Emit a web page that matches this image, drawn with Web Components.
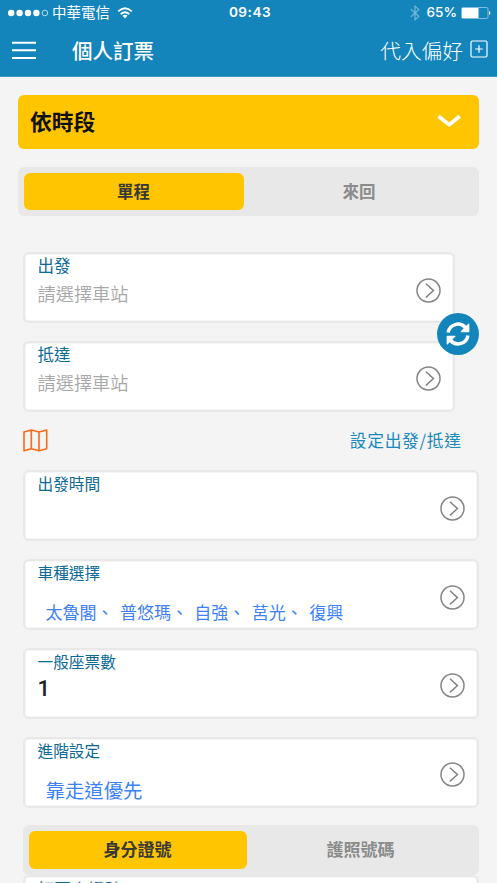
<!DOCTYPE html>
<html lang="zh-Hant">
<head>
<meta charset="utf-8">
<title>個人訂票</title>
<style>
html,body{margin:0;height:883px;overflow:hidden;background:#f4f4f4}
body{font-family:"Noto Sans CJK TC",sans-serif}
</style>
</head>
<body>
<booking-page></booking-page>
<script>
const define = (name, html, setup) => customElements.define(name, class extends HTMLElement {
  constructor() {
    super();
    const t = document.createElement('template');
    t.innerHTML = html;
    this.attachShadow({ mode: 'open' }).append(t.content.cloneNode(true));
    if (setup) setup(this);
  }
});

define('status-bar', `
<style>
:host{display:grid;grid-template-columns:1fr auto 1fr;align-items:center;height:25px;padding:0 6px 0 8px;color:#fff;font:14px/25px Inter,"Noto Sans CJK TC",sans-serif}
div{display:flex;align-items:center}
svg{display:block;flex:none}
.name{font-size:14.5px;margin-left:3px}
.wifi{margin-left:7px}
.time{font-size:13.6px;font-weight:600;letter-spacing:.5px;padding-left:1px}
.end{justify-content:flex-end}
.pct{font-size:13.6px;margin:0 4px 0 7px;font-family:Inter,sans-serif;font-weight:450}
</style>
<div><svg width="41" height="10" viewBox="0 0 41 10"><g fill="#fff"><circle cx="3.2" cy="5" r="3.2"/><circle cx="11.6" cy="5" r="3.2"/><circle cx="20" cy="5" r="3.2"/><circle cx="28.4" cy="5" r="3.2"/></g><circle cx="36.9" cy="5" r="2.8" fill="none" stroke="#fff" stroke-width=".7"/></svg>
<span class="name">中華電信</span>
<svg class="wifi" width="16" height="12" viewBox="0 0 16 12" fill="none" stroke="#fff" stroke-width="1.9"><path d="M1.2 4.4Q8-2 14.8 4.4M3.7 7.1Q8 3.2 12.3 7.1"/><path d="M5.5 8.8Q8 6.8 10.5 8.8L8 11.4Z" fill="#fff" stroke="none"/></svg></div>
<span class="time">09:43</span>
<div class="end"><svg width="10" height="16" viewBox="0 0 10 16" fill="none" stroke="#7dbbdc" stroke-width="1.1"><path d="M.7 4.2L8.8 11.3 5 14.7V1.2L8.8 4.7.7 11.8"/></svg>
<span class="pct">65%</span>
<svg width="30" height="12" viewBox="0 0 30 12"><rect x=".5" y=".5" width="26.5" height="11" rx="1.6" fill="none" stroke="#9dcce4" stroke-width=".8"/><path d="M1 1h16.5v10H1z" fill="#fff"/><path d="M28 4q1.4 .3 1.4 2t-1.4 2z" fill="#fff"/></svg></div>`);

define('title-bar', `
<style>
:host{display:flex;align-items:center;box-sizing:border-box;height:52px;padding:0 9px 1px 12px;color:#fff;border-bottom:1px solid #3d9bc8}
svg{display:block;flex:none}
h1{margin:-1px auto 0 36px;font-size:20.5px;font-weight:500;line-height:30px}
span{font-size:20.7px;font-weight:300;line-height:30px;margin:-1px 7px 0 0}
.plus{margin-top:-2px}
</style>
<svg width="24" height="18" viewBox="0 0 24 18" stroke="#fff" stroke-width="2"><path d="M0 1.7h24M0 9.3h24M0 16.9h24"/></svg>
<h1>個人訂票</h1><span>代入偏好</span>
<svg class="plus" width="18" height="18" viewBox="0 0 18 18" fill="none" stroke="#fff" stroke-width="1.2"><rect x="1" y="1" width="16" height="16" rx="1.5"/><path d="M9 5.2v7.6M5.2 9h7.6"/></svg>`);

define('mode-select', `
<style>
:host{display:flex;align-items:center;justify-content:space-between;box-sizing:border-box;height:54px;padding:0 18.5px 0 12px;border-radius:6px;background:#ffc600;color:#111}
b{font-size:21.8px;font-weight:700;line-height:32px;margin-top:-2px}
svg{display:block;margin-top:-2px}
</style>
<b><slot></slot></b><svg width="24" height="14" viewBox="0 0 24 14" fill="none" stroke="#fff" stroke-width="3.7"><path d="M1.4 2.2L12.2 10.7 22.8 2.2"/></svg>`);

define('segment-tabs', `
<style>
:host{display:grid;grid-template-columns:var(--first,220px) 1fr;box-sizing:border-box;height:49px;padding:6px 5.5px;border-radius:6px;background:#e8e8e8;font-size:16.5px;font-weight:700;line-height:36px;text-align:center}
.on{background:#ffc600;border-radius:6px;color:#383838}
.off{color:#8b8b8b;padding-left:1px}
</style>
<div class="on"><slot name="on"></slot></div><div class="off"><slot name="off"></slot></div>`);

define('form-field', `
<style>
:host{display:grid;grid-template-columns:1fr auto;align-items:center;box-sizing:border-box;height:71px;border:2px solid #e8e8e8;box-shadow:inset 0 0 0 .5px #eee;border-radius:6px;background:#fff;padding:0 12px 0 12.5px}
.text{align-self:start;white-space:pre}
.label{height:23px;font-size:var(--label,15.7px);line-height:var(--label-line,24px);color:#0d6996}
.value{color:#a8a8a8;font-size:18.2px;line-height:32px;font-weight:350}
:host([kind=list]) .value{margin:13px 0 0 8px;color:#3c82f6;font-size:var(--value,17px);line-height:30px;font-weight:400;word-spacing:2.6px}
:host([kind=number]) .value{color:#222;font:500 22px/32px Roboto,sans-serif}
svg{display:block;margin-top:5px}
</style>
<div class="text"><div class="label"></div><div class="value"><slot></slot></div></div>
<svg width="25" height="25" viewBox="0 0 25 25" fill="none" stroke="#858585" stroke-width="1.5"><circle cx="12.5" cy="12.5" r="11.5"/><path d="M9.9 5.8l7.6 6.8-7.6 6.8"/></svg>`,
  el => { el.shadowRoot.querySelector('.label').textContent = el.getAttribute('label'); });

define('swap-button', `
<style>
:host{display:grid;place-items:center;width:42px;height:42px;border-radius:50%;background:#1485bb}
</style>
<svg width="24" height="24" viewBox="0 0 22 22" fill="none" stroke="#fff" stroke-width="3.2"><g><path d="M1.9 9.7A9.2 9.2 0 0 1 17.8 5"/><path d="M20.8 2V8.8H14z" fill="#fff" stroke-width="1.2" stroke-linejoin="round"/></g><g transform="rotate(180 11 11)"><path d="M1.9 9.7A9.2 9.2 0 0 1 17.8 5"/><path d="M20.8 2V8.8H14z" fill="#fff" stroke-width="1.2" stroke-linejoin="round"/></g></svg>`);

define('map-row', `
<style>
:host{display:flex;align-items:center;justify-content:space-between;height:58.7px;padding-right:17.4px;color:#1989be;font-size:16.8px;line-height:24px;letter-spacing:.65px}
svg{display:block;margin:-1px 0 0 -.5px}
span{margin-top:-3px}
</style>
<svg width="25" height="23" viewBox="0 0 25 23" fill="none" stroke="#fc6a14" stroke-width="1.6" stroke-linejoin="round"><path d="M1 3L8.3 1 16 3 23.7 1v18.7L16 21.7 8.3 19.7 1 21.7zM8.3 1v18.7M16 3v18.7"/></svg><span><slot></slot></span>`);

define('booking-page', `
<style>
:host{display:block;width:497px;height:883px;overflow:hidden}
header{background:#1485bb;height:77px}
main{padding:18px 18px 0}
segment-tabs.trip{margin-top:18px}
.form{padding-left:5px;margin-top:36px}
.stations{position:relative;display:grid;gap:17.8px;padding-right:24px;--label:16.5px;--label-line:22px}
.stations swap-button{position:absolute;right:0;top:61px}
.fields{display:grid;gap:17.75px}
.id{--first:218px;height:50px;font-size:17px}
.last{margin-top:-18.5px}
</style>
<header><status-bar></status-bar><title-bar></title-bar></header>
<main>
<mode-select>依時段</mode-select>
<segment-tabs class="trip"><span slot="on">單程</span><span slot="off">來回</span></segment-tabs>
<div class="form">
<div class="stations"><form-field label="出發">請選擇車站</form-field><form-field label="抵達">請選擇車站</form-field><swap-button></swap-button></div>
<map-row>設定出發/抵達</map-row>
<div class="fields">
<form-field label="出發時間"></form-field>
<form-field label="車種選擇" kind="list">太魯閣、 普悠瑪、 自強、 莒光、 復興</form-field>
<form-field label="一般座票數" kind="number">1</form-field>
<form-field label="進階設定" kind="list" style="--value:19.4px">靠走道優先</form-field>
<segment-tabs class="id"><span slot="on">身分證號</span><span slot="off">護照號碼</span></segment-tabs>
<form-field class="last" label="訂票人證號" style="--label:16.8px"></form-field>
</div></div>
</main>`);
</script>
</body>
</html>
